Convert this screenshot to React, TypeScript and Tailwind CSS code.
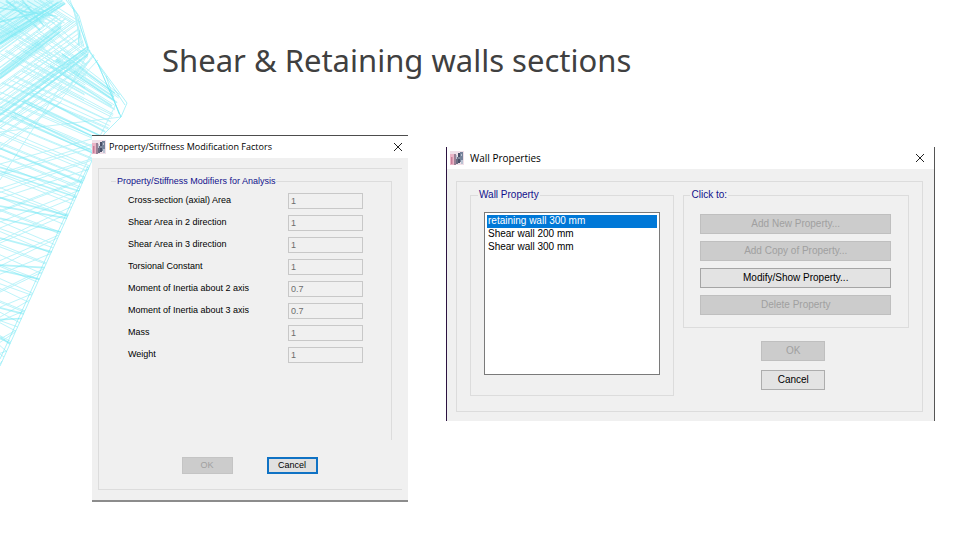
import React from "react";
import clsx from "clsx";

interface Modifier {
  id: string;
  label: string;
  value: string;
}

type Line = [number, number, number, number];

const MODIFIERS: Modifier[] = [
  { id: "area", label: "Cross-section (axial) Area", value: "1" },
  { id: "shear2", label: "Shear Area in 2 direction", value: "1" },
  { id: "shear3", label: "Shear Area in 3 direction", value: "1" },
  { id: "torsion", label: "Torsional Constant", value: "1" },
  { id: "inertia2", label: "Moment of Inertia about 2 axis", value: "0.7" },
  { id: "inertia3", label: "Moment of Inertia about 3 axis", value: "0.7" },
  { id: "mass", label: "Mass", value: "1" },
  { id: "weight", label: "Weight", value: "1" },
];

const WALLS = ["retaining wall 300 mm", "Shear wall 200 mm", "Shear wall 300 mm"];

const ACTIONS = [
  { label: "Add New Property...", enabled: false },
  { label: "Add Copy of Property...", enabled: false },
  { label: "Modify/Show Property...", enabled: true },
  { label: "Delete Property", enabled: false },
];

// spreads count lines between two end lines, with a little unevenness
function fan(from: Line, to: Line, count: number): Line[] {
  return Array.from({ length: count }, (_, i) => {
    return from.map((v, k) => {
      const wobble = 0.45 * Math.sin(i * 2.4 + (k > 1 ? 0.6 : 0));
      const t = Math.min(1, Math.max(0, (i + wobble) / (count - 1)));
      return v + (to[k] - v) * t;
    }) as Line;
  });
}

const THIN: Line[] = [
  // rising to the right
  ...fan([0, 8, 14, 0], [0, 78, 75, 22], 24),
  ...fan([0, 30, 50, 0], [0, 50, 66, 4], 8),
  ...fan([0, 74, 76, 20], [0, 128, 90, 62], 18),
  ...fan([0, 128, 74, 80], [0, 150, 60, 104], 5),
  ...fan([0, 164, 104, 134], [0, 222, 80, 190], 9),
  ...fan([0, 228, 77, 194], [0, 364, 2, 361], 15),
  // falling to the right
  ...fan([0, 2, 42, 24], [46, 0, 80, 22], 12),
  ...fan([0, 14, 40, 42], [0, 30, 56, 62], 6),
  ...fan([52, 22, 88, 52], [0, 54, 84, 100], 14),
  ...fan([60, 48, 120, 94], [0, 84, 108, 130], 16),
  ...fan([0, 92, 104, 136], [0, 158, 79, 190], 16),
  ...fan([0, 164, 77, 194], [0, 354, 4, 357], 28),
  // loose strands near the edge
  ...fan([76, 15, 79, 46], [70, 0, 88, 48], 4),
  ...fan([90, 50, 72, 82], [98, 60, 62, 98], 4),
  [0, 132, 121, 117],
  [115, 106, 78, 180],
  [62, 84, 0, 180],
];

const THICK: Line[] = [
  ...fan([0, 38, 62, 0], [0, 46, 66, 4], 3),
  ...fan([0, 71, 62, 22], [0, 78, 60, 32], 4),
  ...fan([0, 108, 88, 46], [0, 122, 88, 54], 4),
  ...fan([62, 54, 115, 92], [50, 66, 112, 106], 4),
  ...fan([30, 92, 106, 130], [10, 116, 94, 156], 5),
  ...fan([0, 148, 84, 180], [0, 222, 61, 232], 6),
  ...fan([0, 238, 54, 247], [0, 342, 10, 344], 6),
  [0, 8, 56, 16],
  [0, 22, 48, 10],
  [22, 0, 44, 26],
  [6, 0, 40, 30],
];

const OUTLINE =
  "M66 0 77 14 82 32 88 50 127 103 121 117 104 134 90 165 78 193 0 366 M68 0 79 16 89 50 97 62 121 117 M95 60 125 105 M80 30 78 45 M88 166 0 359 M98 64 121 117 M106 76 119 114";

function Mesh() {
  return (
    <svg
      className="pointer-events-none absolute left-0 top-0 h-[380px] w-[130px]"
      viewBox="0 0 130 380"
      fill="none"
      stroke="#6fe8f5"
      aria-hidden="true"
    >
      <g strokeWidth="0.9" opacity="0.5">
        {THIN.map(([x1, y1, x2, y2], i) => (
          <line key={i} x1={x1} y1={y1} x2={x2} y2={y2} />
        ))}
      </g>
      <g strokeWidth="1.7" opacity="0.5">
        {THICK.map(([x1, y1, x2, y2], i) => (
          <line key={i} x1={x1} y1={y1} x2={x2} y2={y2} />
        ))}
      </g>
      <path d="M0 0H62L36 22 0 46Z" fill="#5fe6f4" stroke="none" opacity="0.22" />
      <path d={OUTLINE} strokeWidth="0.8" opacity="0.7" />
    </svg>
  );
}

function AppIcon() {
  return (
    <svg className="h-[14px] w-[14px] shrink-0" viewBox="0 0 14 14" aria-hidden="true">
      <rect width="14" height="14" fill="#f0dfe8" />
      <rect y="3" width="4" height="11" fill="#eab4c6" />
      <rect x="1" y="6" width="1.5" height="7" fill="#c97c98" />
      <rect x="4" y="3" width="2" height="11" fill="#9a8196" />
      <rect x="6" y="6" width="2" height="7" fill="#6b6d82" />
      <rect x="8" y="2" width="2" height="10" fill="#4a5068" />
      <rect x="10" y="1" width="3" height="10" fill="#76839a" />
      <path d="M6 4h1v4H6zM11 3h1v2h-1zM8.5 6h1v2h-1zM11 9h2v4h-2z" fill="#b9c3d2" />
    </svg>
  );
}

function TitleBar({ title, roomy = false }: { title: string; roomy?: boolean }) {
  return (
    <header
      className={clsx(
        "flex h-[22px] items-center bg-white font-['Open_Sans','Noto_Sans',sans-serif] text-black",
        roomy ? "gap-[6px] pl-[3px] pr-2 text-[10px]" : "gap-[3px] pr-1 text-[9px]"
      )}
    >
      <AppIcon />
      <h2 className="flex-1 whitespace-nowrap">{title}</h2>
      <button type="button" aria-label="Close" className="flex h-3 w-3 items-center justify-center">
        <svg className="h-[10px] w-[10px]" viewBox="0 0 10 10" stroke="#222" fill="none">
          <path d="M1 1l8 8M9 1L1 9" />
        </svg>
      </button>
    </header>
  );
}

function StiffnessDialog() {
  return (
    <section className="border-b-2 border-t border-b-[#8c8c8c] border-t-[#4d4d4d] bg-[#f0f0f0]">
      <TitleBar title="Property/Stiffness Modification Factors" />
      <form className="mx-[6px] my-[10px] border-y border-l border-[#dcdcdc] pb-[15px] pl-3 pr-[10px] pt-[5px] font-['Liberation_Sans',Arial,sans-serif] text-[9px]">
        <fieldset className="min-h-[266px] border-r border-t border-[#dcdcdc] pl-[17px] pr-7">
          <legend className="-ml-3 px-px leading-[14px] text-[#10108c]">
            Property/Stiffness Modifiers for Analysis
          </legend>
          <div className="mt-[5px] flex flex-col gap-[6px]">
            {MODIFIERS.map((m) => (
              <div key={m.id} className="flex items-center justify-between">
                <label htmlFor={m.id} className="whitespace-nowrap text-black">
                  {m.label}
                </label>
                <input
                  id={m.id}
                  defaultValue={m.value}
                  disabled
                  className="h-4 w-[75px] border border-[#c8c8c8] bg-[#f0f0f0] px-[2px] text-[#6d6d6d]"
                />
              </div>
            ))}
          </div>
        </fieldset>
        <div className="mt-[17px] flex justify-center gap-[34px] pr-1">
          <button type="button" disabled className="h-[17px] w-[51px] border border-[#c4c4c4] bg-[#cccccc] leading-none text-[#a0a0a0]">
            OK
          </button>
          <button type="button" className="h-[17px] w-[51px] border-2 border-[#0f72c4] bg-[#e1e1e1] leading-none text-black">
            Cancel
          </button>
        </div>
      </form>
    </section>
  );
}

function WallDialog() {
  return (
    <section className="mt-3 border-x border-l-[#2b1240] border-r-[#555555] bg-[#f0f0f0]">
      <TitleBar title="Wall Properties" roomy />
      <form className="mb-[9px] ml-[9px] mr-[11px] mt-3 grid grid-cols-[204fr_225fr] gap-[9px] border border-[#dcdcdc] px-[13px] pb-[15px] pt-[6px] font-['Liberation_Sans',Arial,sans-serif] text-[10px]">
        <fieldset className="min-w-0 border border-[#dcdcdc] px-[13px] pb-5">
          <legend className="-ml-[6px] px-px leading-[14px] text-[#10108c]">Wall Property</legend>
          <select
            size={4}
            defaultValue={WALLS[0]}
            aria-label="Wall Property"
            className="mt-[10px] block h-[163px] w-full overflow-hidden border border-[#7a7a7a] bg-white p-[2px] text-[10px] text-black outline-none"
          >
            {WALLS.map((wall) => (
              <option
                key={wall}
                value={wall}
                className="h-[13px] min-h-[13px] px-px py-0 leading-[13px] checked:bg-[linear-gradient(#0078d7,#0078d7)] checked:[-webkit-text-fill-color:#ffffff]"
              >
                {wall}
              </option>
            ))}
          </select>
        </fieldset>
        <div>
          <fieldset className="border border-[#dcdcdc] pb-3 pl-4 pr-[17px]">
            <legend className="-ml-[10px] px-px leading-[14px] text-[#10108c]">Click to:</legend>
            <div className="mt-3 flex flex-col gap-[7px]">
              {ACTIONS.map((action) => (
                <button
                  key={action.label}
                  type="button"
                  disabled={!action.enabled}
                  className="h-5 border border-[#a5a5a5] bg-[#e3e3e3] leading-none text-black disabled:border-[#bfbfbf] disabled:bg-[#cccccc] disabled:text-[#a0a0a0]"
                >
                  {action.label}
                </button>
              ))}
            </div>
          </fieldset>
          <div className="mt-[13px] flex flex-col items-center gap-[9px] pr-[6px]">
            <button type="button" disabled className="h-5 w-16 border border-[#bfbfbf] bg-[#cccccc] leading-none text-[#a0a0a0]">
              OK
            </button>
            <button type="button" className="h-5 w-16 border border-[#adadad] bg-[#e3e3e3] leading-none text-black">
              Cancel
            </button>
          </div>
        </div>
      </form>
    </section>
  );
}

export default function App() {
  return (
    <main className="relative min-h-screen bg-white pb-9">
      <Mesh />
      <h1 className="relative pl-[162px] pt-10 font-['Noto_Sans','Open_Sans',sans-serif] text-[31px] leading-10 text-[#404040]">
        Shear &amp; Retaining walls sections
      </h1>
      <div className="relative mt-[55px] grid grid-cols-[316fr_489fr] items-start gap-[38px] pl-[92px] pr-[25px]">
        <StiffnessDialog />
        <WallDialog />
      </div>
    </main>
  );
}
